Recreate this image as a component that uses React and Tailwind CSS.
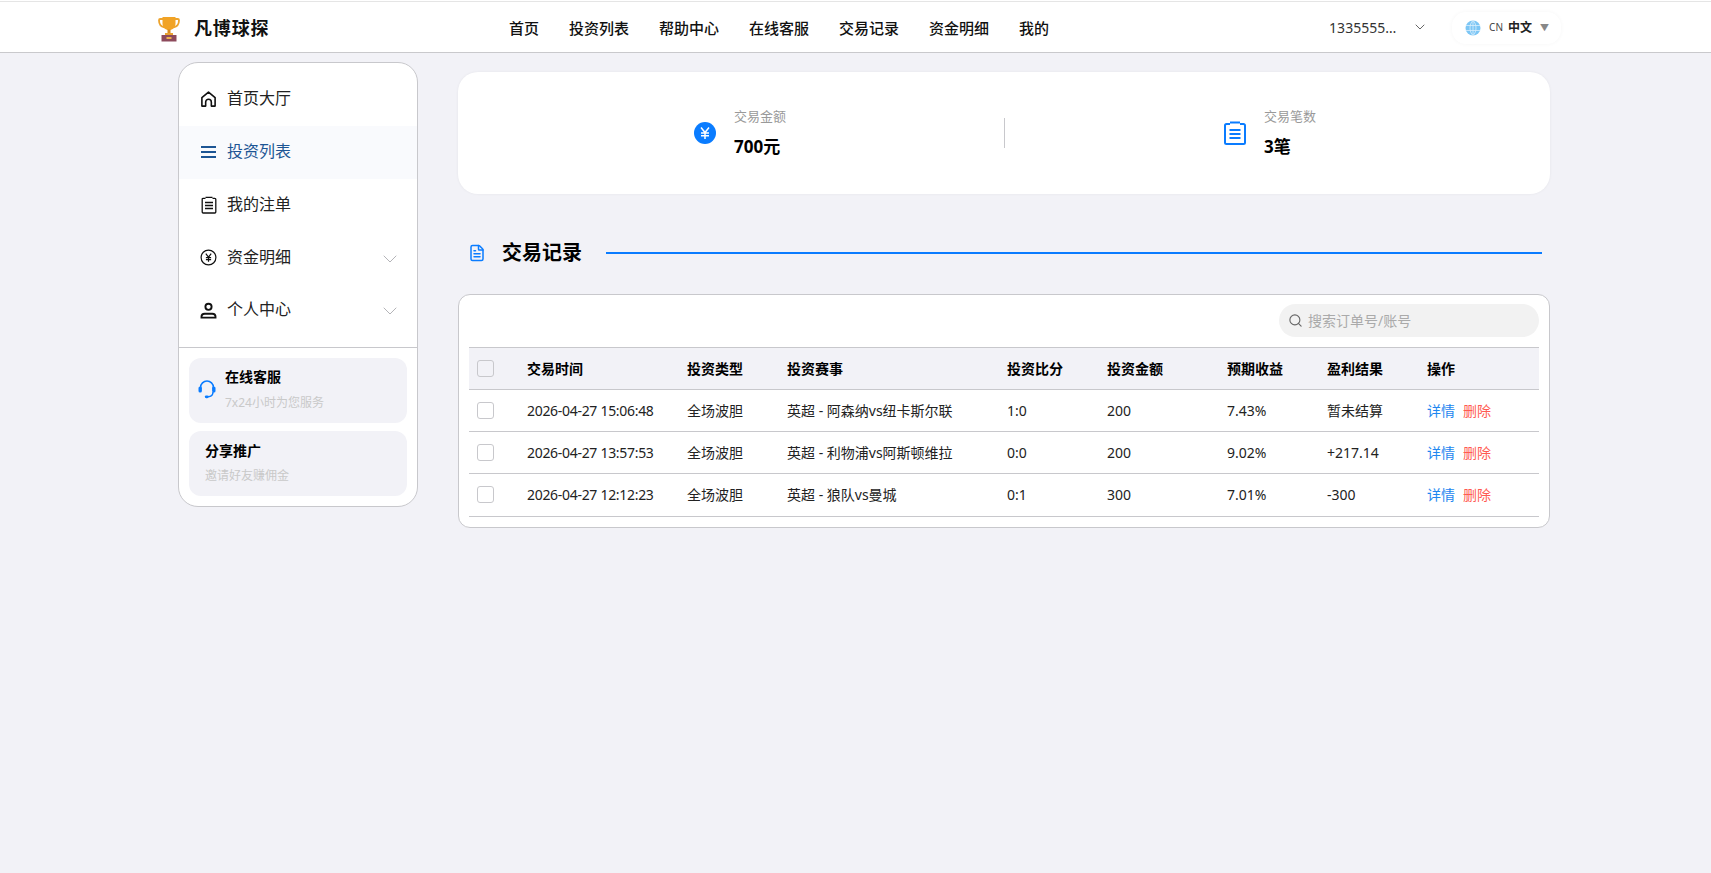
import React from 'react';
import { ChevronDown, Search, FileText } from 'lucide-react';

const font = { fontFamily: '"Noto Sans", "Noto Sans CJK SC", sans-serif' };

const navItems = ['首页', '投资列表', '帮助中心', '在线客服', '交易记录', '资金明细', '我的'];

const rows = [
  { time: '2026-04-27 15:06:48', match: '英超 - 阿森纳vs纽卡斯尔联', score: '1:0', amount: '200', rate: '7.43%', result: '暂未结算' },
  { time: '2026-04-27 13:57:53', match: '英超 - 利物浦vs阿斯顿维拉', score: '0:0', amount: '200', rate: '9.02%', result: '+217.14' },
  { time: '2026-04-27 12:12:23', match: '英超 - 狼队vs曼城', score: '0:1', amount: '300', rate: '7.01%', result: '-300' },
];

function Trophy() {
  return (
    <svg width="22" height="26" viewBox="0 0 22 26" className="shrink-0">
      <path d="M5 3H2.200C1.500 3 1 3.500 1 4.200 1 8 3 10.600 6.500 11.400M17 3h2.800c.7 0 1.200.5 1.200 1.200 0 3.800-2 6.400-5.500 7.200" fill="none" stroke="#eda32c" strokeWidth="1.800" />
      <path d="M4.500 1h13v6.500c0 3.800-2.600 6.500-6.500 6.500S4.500 11.300 4.500 7.500z" fill="#f1a325" />
      <path d="M9.500 13.500h3v4h-3z" fill="#d98a1e" />
      <path d="M7 17h8v2H7z" fill="#e8a030" />
      <path d="M3.500 19h15v6.500h-15z" fill="#8d4a5c" />
      <path d="M8.500 21h5v2h-5z" fill="#eeb04a" />
    </svg>
  );
}

function HomeIcon() {
  return (
    <svg width="18" height="18" viewBox="0 0 18 18" fill="none" stroke="#111" strokeWidth="1.700" strokeLinejoin="round">
      <path d="M2 16.500V7.600L9 1.800l7 5.800v8.900h-4v-4.200a3 3 0 0 0-6 0v4.200z" />
    </svg>
  );
}

function MenuIcon() {
  return (
    <svg width="17" height="14" viewBox="0 0 17 14" fill="none" stroke="#1d5594" strokeWidth="1.800">
      <path d="M1 2h15M1 7h15M1 12h15" />
    </svg>
  );
}

function ListIcon() {
  return (
    <svg width="16" height="18" viewBox="0 0 16 18" fill="none" stroke="#111" strokeWidth="1.300">
      <path d="M4.500 2.300H2.200c-.6 0-1 .4-1 1v12.700c0 .6.400 1 1 1h11.600c.6 0 1-.4 1-1V3.300c0-.6-.4-1-1-1h-2.300" />
      <path d="M4.500 1.400h7M4 6.500h8M4 9.500h8M4 12.500h8" />
    </svg>
  );
}

function YenCircle() {
  return (
    <svg width="17" height="17" viewBox="0 0 17 17" fill="none" stroke="#111" strokeWidth="1.200">
      <circle cx="8.500" cy="8.500" r="7.400" />
      <path d="M5.800 4.600l2.700 3.600 2.700-3.600M8.500 8.200v4.600M5.900 8.600h5.200M5.900 10.600h5.200" />
    </svg>
  );
}

function UserIcon() {
  return (
    <svg width="17" height="17" viewBox="0 0 17 17" fill="none" stroke="#111" strokeWidth="1.900">
      <circle cx="8.500" cy="4.800" r="3.100" />
      <path d="M1.500 15.600v-1c0-1.900 1.500-2.900 3.200-2.900h7.600c1.700 0 3.200 1 3.200 2.900v1z" />
    </svg>
  );
}

function Headset() {
  return (
    <svg width="18" height="20" viewBox="0 0 18 20" fill="none" className="shrink-0">
      <path d="M2.600 9V7.400a6.400 6.400 0 0 1 12.800 0V9M15 12c0 3-2 4.600-5 4.800" stroke="#0a7cff" strokeWidth="1.500" />
      <rect x="0.500" y="6.500" width="3.400" height="6" rx="1.600" fill="#0a7cff" />
      <rect x="14.100" y="6.500" width="3.400" height="6" rx="1.600" fill="#0a7cff" />
      <rect x="6.800" y="15.400" width="3.800" height="2.800" rx="1.400" fill="#0a7cff" />
    </svg>
  );
}

function Globe() {
  return (
    <svg width="16" height="16" viewBox="0 0 16 16" fill="none">
      <circle cx="8" cy="8" r="7.500" fill="#7cc6f5" />
      <path d="M0.800 5.500h14.400M0.800 10.500h14.400M8 .5v15M8 .5C4 4 4 12 8 15.500M8 .5c4 3.500 4 11.500 0 15" stroke="#d9effc" strokeWidth=".8" />
    </svg>
  );
}

function SideItem({ icon, label, active, arrow }) {
  return (
    <div className={`flex h-[52.75px] items-center pl-[21px] pr-[15px] text-[16px] ${active ? 'bg-[#f9fafd] text-[#1d5594]' : 'text-[#222]'}`}>
      <span className="flex w-[17px] justify-center">{icon}</span>
      <span className="ml-[10px] flex-1 -translate-y-[1px]">{label}</span>
      {arrow && <ChevronDown size={24} strokeWidth={1} className="translate-y-[1px] text-[#b4b4b8]" />}
    </div>
  );
}

function Stat({ icon, label, value, className }) {
  return (
    <div className={`flex items-center ${className}`}>
      <span className="flex w-[40px] shrink-0">{icon}</span>
      <div className="pb-[2px]">
        <div className="text-[13px] leading-[18px] text-[#999]">{label}</div>
        <div className="mt-[11px] text-[17px] font-bold leading-[22px] text-black">{value}</div>
      </div>
    </div>
  );
}

function Check({ clear }) {
  return <span className={`block h-[17px] w-[17px] rounded-[3px] border border-[#c8c8cc] ${clear ? 'bg-transparent' : 'bg-white'}`}></span>;
}

export default function App() {
  return (
    <div className="min-h-screen bg-[#f2f2f7] pb-[10px]" style={font}>
      <div className="bg-white pt-px">
        <header className="flex h-[52px] items-center border-t border-b border-t-[#e5e5e5] border-b-[#c9c9cc] bg-white pl-[158px] pt-[3px]">
          <Trophy />
          <span className="ml-[14px] w-[315px] text-[18px] font-bold tracking-[0.85px] text-[#111]">凡博球探</span>
          <nav className="flex gap-[30px] text-[15px] font-medium text-[#111]">
            {navItems.map((item) => (
              <a key={item}>{item}</a>
            ))}
          </nav>
          <span className="ml-[280px] w-[72px] -translate-y-[1px] whitespace-nowrap text-[14px] text-[#333]">1335555…</span>
          <ChevronDown size={16} strokeWidth={1.500} className="ml-[11px] -translate-y-[2px] text-[#666]" />
          <div className="ml-[24px] flex h-[32px] w-[109px] -translate-y-[1px] items-center rounded-[14px] bg-white pl-[13px] shadow-[0_0_4px_rgba(0,0,0,0.04)]">
            <Globe />
            <span className="ml-[8px] text-[10px] text-[#444]">CN</span>
            <span className="ml-[5px] text-[12px] font-bold text-[#222]">中文</span>
            <span className="ml-[8px] text-[9px] text-[#888]">▼</span>
          </div>
        </header>
      </div>

      <div className="flex items-start pl-[178px]">
        <aside className="mt-[9px] w-[240px] overflow-hidden rounded-[20px] border border-[#c8c8cc] bg-white">
          <div className="pt-[10px]">
            <SideItem icon={<HomeIcon />} label="首页大厅" />
            <SideItem icon={<MenuIcon />} label="投资列表" active />
            <SideItem icon={<ListIcon />} label="我的注单" />
            <SideItem icon={<YenCircle />} label="资金明细" arrow />
            <SideItem icon={<UserIcon />} label="个人中心" arrow />
          </div>
          <div className="mt-[10px] flex flex-col gap-[8px] border-t border-[#c8c8cc] px-[10px] pb-[10px] pt-[10px]">
            <div className="flex h-[65px] items-center rounded-[12px] bg-[#f2f2f7] pl-[9px]">
              <Headset />
              <div className="ml-[9px] pb-[2px]">
                <div className="text-[14px] font-bold leading-[20px] text-black">在线客服</div>
                <div className="mt-[7px] text-[12px] leading-[18px] text-[#c9c9c9]">7x24小时为您服务</div>
              </div>
            </div>
            <div className="flex h-[65px] items-center rounded-[12px] bg-[#f2f2f7] pl-[16px]">
              <div>
                <div className="text-[14px] font-bold leading-[20px] text-black">分享推广</div>
                <div className="mt-[6px] text-[12px] leading-[18px] text-[#c9c9c9]">邀请好友赚佣金</div>
              </div>
            </div>
          </div>
        </aside>

        <main className="ml-[40px] mt-[19px] w-[1092px]">
          <section className="flex h-[122px] items-center rounded-[20px] bg-white shadow-[0_0_3px_rgba(0,0,0,0.06)]">
            <Stat
              className="w-[546px] pl-[236px]"
              label="交易金额"
              value="700元"
              icon={
                <span className="flex h-[22px] w-[22px] items-center justify-center rounded-full bg-[#0a7cff]">
                  <svg width="10" height="12" viewBox="0 0 10 12" fill="none" stroke="#fff" strokeWidth="1.500">
                    <path d="M1 .5l4 5 4-5M5 5.500V12M1 6h8M1 8.700h8" />
                  </svg>
                </span>
              }
            />
            <div className="h-[30px] w-px bg-[#c8c8cc]"></div>
            <Stat
              className="flex-1 pl-[219px]"
              label="交易笔数"
              value="3笔"
              icon={
                <svg width="22" height="24" viewBox="0 0 22 24" fill="none" stroke="#0a7cff" strokeWidth="2">
                  <path d="M6 3H2.500C1.700 3 1 3.700 1 4.500v17c0 .8.700 1.500 1.500 1.500h17c.8 0 1.500-.7 1.500-1.500v-17c0-.8-.7-1.500-1.500-1.500H16" />
                  <path d="M6 1.500h10M5.500 9h11M5.500 13h11M5.500 17h11" />
                </svg>
              }
            />
          </section>

          <div className="mt-[41px] flex h-[36px] items-center pl-[10px] pr-[8px]">
            <FileText size={18} strokeWidth={2} className="text-[#0a7cff]" />
            <h2 className="ml-[16px] text-[20px] font-bold text-black">交易记录</h2>
            <div className="ml-[24px] h-[2px] flex-1 bg-[#0a7cff]"></div>
          </div>

          <section className="mt-[23px] rounded-[12px] border border-[#c8c8cc] bg-white px-[10px] pb-[10px] pt-[9px]">
            <div className="flex justify-end">
              <div className="flex h-[33px] w-[260px] items-center rounded-full bg-[#f2f2f2] pl-[9px]">
                <Search size={15} strokeWidth={1.800} className="text-[#666]" />
                <span className="ml-[5px] text-[14px] text-[#aaa]">搜索订单号/账号</span>
              </div>
            </div>
            <table className="mt-[10px] w-full table-fixed border-collapse text-left text-[14px] text-[#222]">
              <thead>
                <tr className="h-[42px] border-y border-[#c8c8cc] bg-[#f2f2f7] font-bold text-black">
                  <th className="w-[58px] pl-[8px]"><Check clear /></th>
                  <th className="w-[160px]">交易时间</th>
                  <th className="w-[100px]">投资类型</th>
                  <th className="w-[220px]">投资赛事</th>
                  <th className="w-[100px]">投资比分</th>
                  <th className="w-[120px]">投资金额</th>
                  <th className="w-[100px]">预期收益</th>
                  <th className="w-[100px]">盈利结果</th>
                  <th>操作</th>
                </tr>
              </thead>
              <tbody>
                {rows.map((row) => (
                  <tr key={row.time} className="h-[42.200px] border-b border-[#c8c8cc]">
                    <td className="pl-[8px]"><Check /></td>
                    <td className="tracking-[-0.3px]">{row.time}</td>
                    <td>全场波胆</td>
                    <td>{row.match}</td>
                    <td>{row.score}</td>
                    <td>{row.amount}</td>
                    <td>{row.rate}</td>
                    <td>{row.result}</td>
                    <td>
                      <a className="text-[#1e87f0]">详情</a>
                      <a className="ml-[8px] text-[#ff5a52]">删除</a>
                    </td>
                  </tr>
                ))}
              </tbody>
            </table>
          </section>
        </main>
      </div>
    </div>
  );
}
